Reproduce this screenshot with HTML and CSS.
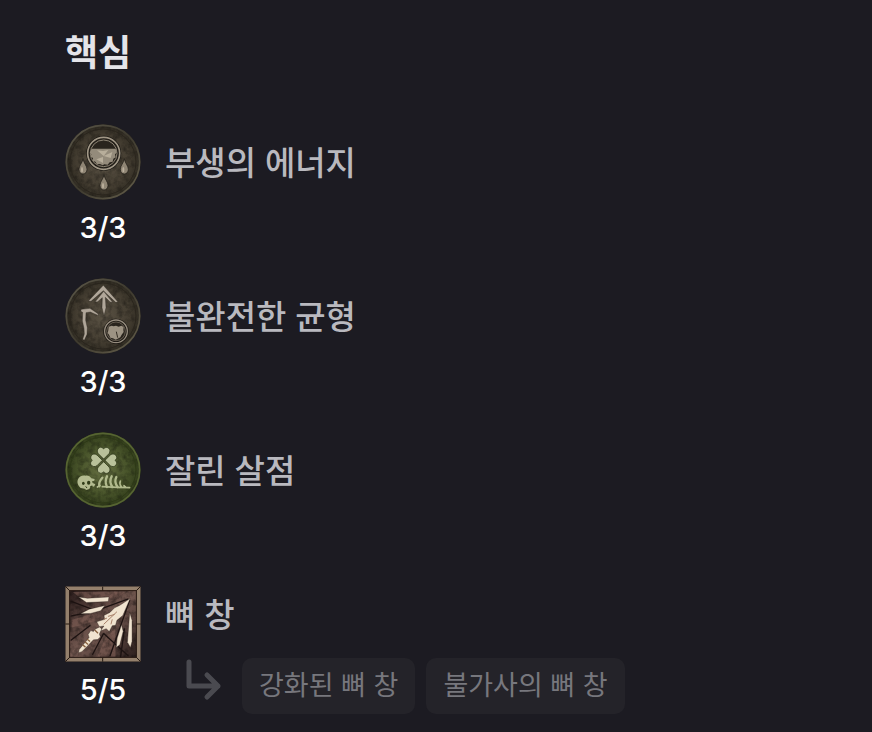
FILE: index.html
```html
<!DOCTYPE html>
<html lang="ko">
<head>
    <meta charset="UTF-8">
    <meta name="viewport" content="width=device-width, initial-scale=1.0">
    <title>핵심</title>
    <link rel="stylesheet" href="styles.css">
</head>
<body>

    <!-- Shared gradients and the stone texture -->
    <svg class="defs" aria-hidden="true">
        <defs>
            <radialGradient id="stone">
                <stop offset="0" stop-color="#5a5244"/>
                <stop offset="0.7" stop-color="#443d31"/>
                <stop offset="1" stop-color="#2e2a21"/>
            </radialGradient>
            <radialGradient id="moss">
                <stop offset="0" stop-color="#667042"/>
                <stop offset="0.65" stop-color="#48542a"/>
                <stop offset="1" stop-color="#303b1a"/>
            </radialGradient>
            <linearGradient id="rim" x1="0" y1="0" x2="1" y2="1">
                <stop offset="0" stop-color="#5e5a4c"/>
                <stop offset="0.5" stop-color="#3e3a2f"/>
                <stop offset="1" stop-color="#66604d"/>
            </linearGradient>
            <linearGradient id="wood" x1="0" y1="0" x2="1" y2="1">
                <stop offset="0" stop-color="#2a1c1b"/>
                <stop offset="0.5" stop-color="#735850"/>
                <stop offset="1" stop-color="#2c1f1d"/>
            </linearGradient>
            <filter id="grain" x="0" y="0" width="100%" height="100%">
                <feTurbulence type="fractalNoise" baseFrequency="0.06" numOctaves="3" seed="4"/>
                <feColorMatrix values="0 0 0 0 0  0 0 0 0 0  0 0 0 0 0  1.8 0 0 0 -0.7"/>
                <feComposite in2="SourceGraphic" operator="in"/>
            </filter>
        </defs>
    </svg>

    <main class="skills">
        <h1>핵심</h1>

        <ul class="skill-list">
            <li class="skill">
                <div class="rank">
                    <svg class="icon" viewBox="27 20 228 228" aria-hidden="true">
                        <circle cx="141" cy="134" r="113" fill="url(#stone)"/>
                        <circle cx="141" cy="134" r="113" filter="url(#grain)" opacity="0.4"/>
                        <circle cx="141" cy="134" r="110" fill="none" stroke="url(#rim)" stroke-width="5"/>
                        <circle cx="141" cy="134" r="99" fill="none" stroke="#2a251d" stroke-width="3"/>
                        <circle cx="143" cy="108" r="48" fill="#29241d" stroke="#1c1914" stroke-width="9"/>
                        <circle cx="143" cy="108" r="48" fill="none" stroke="#a19786" stroke-width="5"/>
                        <circle cx="143" cy="108" r="40" fill="none" stroke="#8b8272" stroke-width="3"/>
                        <path d="M107 94h72l3 12-5 5 2 9-7 4-2 9-9 2-6 7-10-1-5 3-8-4-9 1-5-8-8-3 1-8-7-4 2-7-5-5z" fill="#948b7b"/>
                        <path d="M143 116l-20-17 18 2 16-3zM143 116l26-12-5 18zM141 119l-20 7 20 11z" fill="#b8ae9b"/>
                        <g fill="#8f8574" stroke="#1b1813" stroke-width="2">
                            <path id="drop" d="M81 124c-1 12-12 20-12 32 0 9 5 14 12 14s12-6 12-14c0-11-10-18-12-32z"/>
                            <use href="#drop" x="124"/>
                            <use href="#drop" x="63" y="48"/>
                        </g>
                        <g fill="#bbb09d">
                            <ellipse id="shine" cx="78" cy="157" rx="3" ry="8"/>
                            <use href="#shine" x="124"/>
                            <use href="#shine" x="63" y="48"/>
                        </g>
                    </svg>
                    <span class="count">3/3</span>
                </div>
                <h2>부생의 에너지</h2>
            </li>

            <li class="skill">
                <div class="rank">
                    <svg class="icon" viewBox="27 20 228 228" aria-hidden="true">
                        <circle cx="141" cy="134" r="113" fill="url(#stone)"/>
                        <circle cx="141" cy="134" r="113" filter="url(#grain)" opacity="0.4"/>
                        <circle cx="141" cy="134" r="110" fill="none" stroke="url(#rim)" stroke-width="5"/>
                        <circle cx="141" cy="134" r="99" fill="none" stroke="#2a251d" stroke-width="3"/>
                        <g fill="#b0a699" stroke="#1b1813" stroke-width="1">
                            <path d="M142 42l44 50-7 1-37-35-37 32-8-1z"/>
                            <path d="M143 60l27 33-8-1-14-14 2 31-6 24-6-24 1-30-14 12-8 1z"/>
                            <path d="M76 114l26-3 24 16 2 6-25-11-13 2-1 23 5 22-1 20-8 18-5-3 5-16-1-17-5-22 1-26-6-3z"/>
                        </g>
                        <circle cx="180" cy="180" r="34" fill="#29241d" stroke="#1b1813" stroke-width="8"/>
                        <circle cx="180" cy="180" r="34" fill="none" stroke="#968c7e" stroke-width="4"/>
                        <circle cx="180" cy="180" r="28" fill="none" stroke="#837969" stroke-width="2"/>
                        <path d="M158 166l9-3 6 2 7-2 8 3 8-3 7 4-1 9 1 6-6 8-4 8-8 4-6 3-8-4-8-2-4-9-4-5 2-8z" fill="#9d9383"/>
                        <path d="M181 181l4 18" fill="none" stroke="#342d23" stroke-width="3"/>
                    </svg>
                    <span class="count">3/3</span>
                </div>
                <h2>불완전한 균형</h2>
            </li>

            <li class="skill">
                <div class="rank">
                    <svg class="icon" viewBox="27 20 228 228" aria-hidden="true">
                        <circle cx="141" cy="134" r="113" fill="url(#moss)"/>
                        <circle cx="141" cy="134" r="113" filter="url(#grain)" opacity="0.4"/>
                        <circle cx="141" cy="134" r="110" fill="none" stroke="#566432" stroke-width="5"/>
                        <circle cx="141" cy="134" r="99" fill="none" stroke="#2d3916" stroke-width="3"/>
                        <g fill="#b9c19a" stroke="#222c10" stroke-width="2">
                            <path id="leaf" d="M143 101l-16-16c-5-7-3-14 3-18 5-3 11 0 13 4 3-4 9-7 14-3 6 4 6 11 2 17z"/>
                            <use href="#leaf" transform="rotate(90 143 105)"/>
                            <use href="#leaf" transform="rotate(180 143 105)"/>
                            <use href="#leaf" transform="rotate(270 143 105)"/>
                        </g>
                        <path d="M66 162c3-9 13-13 23-11 8-1 14 3 17 8l10 2-1 5-7 2 2 5 8 4-4 7-9-3-5 10-9 3-5-4-12-2c-8-7-12-17-8-26z" fill="#b3bb90"/>
                        <ellipse cx="82" cy="174" rx="4" ry="5" fill="#303c18"/>
                        <ellipse cx="98" cy="172" rx="5" ry="6" fill="#303c18"/>
                        <path d="M89 183l4 5M103 184l6-2" stroke="#303c18" stroke-width="3"/>
                        <g fill="none" stroke="#b1ba8d" stroke-width="7" stroke-linecap="round">
                            <path d="M139 157c-8 9-11 18-9 26M153 153c-6 11-5 21 0 32M167 153c-6 11-5 21 2 32M181 155c-5 10-3 21 4 30"/>
                            <path d="M193 167c-3 7-1 12 3 17M124 185l8-5M139 184l47 2 35 1M204 181l5 5" stroke-width="5"/>
                        </g>
                    </svg>
                    <span class="count">3/3</span>
                </div>
                <h2>잘린 살점</h2>
            </li>

            <li class="skill">
                <div class="rank">
                    <svg class="icon" viewBox="27 24 230 230" aria-hidden="true">
                        <rect x="28" y="25" width="228" height="228" fill="#1a1110"/>
                        <rect x="34" y="31" width="216" height="216" fill="none" stroke="#94806c" stroke-width="11"/>
                        <rect x="41" y="38" width="202" height="202" fill="url(#wood)" stroke="#30211a" stroke-width="3"/>
                        <path d="M46 127l66-20 10 22-75 21zM150 180l28-28 2 85h-55zM50 42h160l-28 20-108-2z" fill="#8a655b" opacity="0.5"/>
                        <rect x="42" y="39" width="200" height="200" filter="url(#grain)" opacity="0.5"/>
                        <path d="M141 26v12M141 241v12M28 139h12M244 139h12M28 25l13 13M256 25l-13 13M28 253l13-13M256 253l-13-13" stroke="#241811" stroke-width="3"/>
                        <path d="M44 115l75-16 100-36M44 189l60-46M110 232l34-65M163 236l60-170M44 70l74 28M144 168l75 68M195 240l12-88" fill="none" stroke="#1c1211" stroke-width="4"/>
                        <g fill="#f0e3cf" stroke="#1d1210" stroke-width="1">
                            <path d="M68 57l27 4 65-4-2 14-66 3z"/>
                            <path d="M74 108l26-14 48-11-13 16-31 8z"/>
                            <path d="M198 141l5 20-10 41-11 8 3-29z"/>
                            <path d="M223 104l7 24v63l-5 19-9-16 3-40z"/>
                            <path d="M224 62l-22 51-18 15-4 15-10 1-9 18-9-9-18 7 11-15-14 2-8-15 24-7-2-12 18-9 14-14 15-7z"/>
                            <path d="M119 154l13-6 6 6-7 15 3 9-8 8-13 1-17 18-18 18-10 3 2-10 15-18 15-18-3-9 8-12 8 3z"/>
                        </g>
                        <path d="M184 102l-40 38M177 110l-20 6M170 125l-4 15M154 121l-10 4" fill="none" stroke="#a77f68" stroke-width="3"/>
                        <path d="M117 157l10 10M94 185l9 7M87 193l10 8M80 202l9 7" fill="none" stroke="#87613f" stroke-width="4"/>
                    </svg>
                    <span class="count">5/5</span>
                </div>
                <div class="details">
                    <h2>뼈 창</h2>
                    <div class="upgrades">
                        <svg class="arrow" viewBox="0 0 36 38" aria-hidden="true">
                            <path d="M4 4v24h29M22 17l11 11-11 11"/>
                        </svg>
                        <span class="chip">강화된 뼈 창</span>
                        <span class="chip">불가사의 뼈 창</span>
                    </div>
                </div>
            </li>
        </ul>
    </main>

</body>
</html>
```
FILE: styles.css
```css
* {
    box-sizing: border-box;
}
body {
    margin: 0;
    background-color: #1c1b22;
    color: #e4e4e9;
    font-family: Inter, "Noto Sans CJK KR", sans-serif;
}
.defs {
    position: absolute;
    width: 0;
    height: 0;
}
.skills {
    padding: 24px 65px 18px;
}
h1 {
    margin: 0;
    font-size: 36px;
    font-weight: 700;
    line-height: 58px;
}
.skill-list {
    display: flex;
    flex-direction: column;
    gap: 22px;
    margin: 42px 0 0;
    padding: 0;
    list-style: none;
}
.skill {
    display: flex;
    gap: 24px;
}
.rank {
    display: flex;
    flex-direction: column;
    align-items: center;
}
.icon {
    display: block;
    width: 76px;
    height: 76px;
}
.count {
    color: #fff;
    font-size: 29px;
    font-weight: 500;
    font-feature-settings: "calt" 0;
    line-height: 56px;
}
h2 {
    margin: 0;
    color: #b9b9bf;
    font-size: 33px;
    font-weight: 500;
    line-height: 78px;
}
.details h2 {
    line-height: 58px;
}
.upgrades {
    display: flex;
    align-items: flex-start;
    gap: 11px;
    margin: 14px 0 0 20px;
}
.arrow {
    width: 36px;
    height: 38px;
    margin-right: 10px;
    overflow: visible;
    fill: none;
    stroke: #4a4a50;
    stroke-width: 5;
    stroke-linecap: round;
    stroke-linejoin: round;
}
.chip {
    padding: 0 17px;
    border-radius: 10px;
    background-color: #242329;
    color: #77777d;
    font-size: 27px;
    line-height: 56px;
    white-space: nowrap;
}
```
